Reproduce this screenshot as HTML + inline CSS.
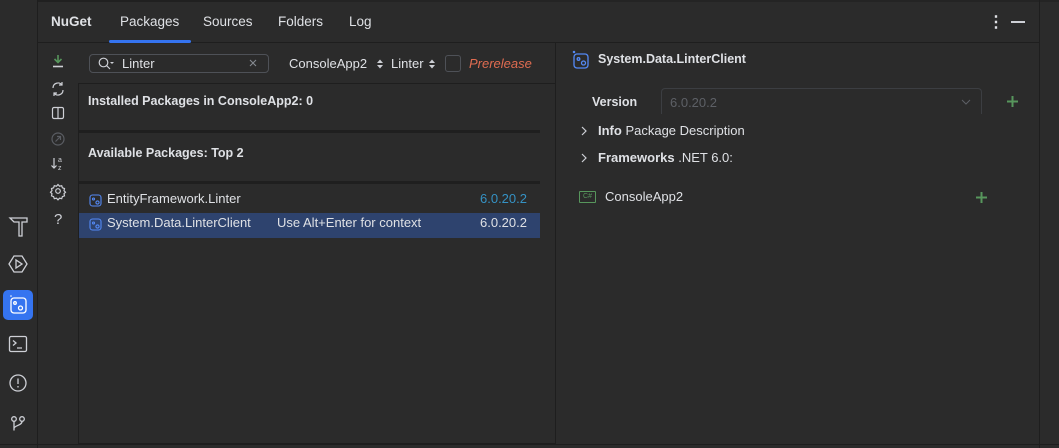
<!DOCTYPE html>
<html><head><meta charset="utf-8"><style>
*{margin:0;padding:0;box-sizing:border-box}
body{width:1059px;height:448px;background:#2b2b2b;font-family:"Liberation Sans",sans-serif;color:#dfe1e5;font-size:13px;position:relative;overflow:hidden}
.a{position:absolute}
.line{position:absolute;background:#1e1e1e}
.tab{position:absolute;top:14px;font-size:13.5px;color:#dfe1e5}
.lbl{position:absolute;white-space:nowrap}
</style></head><body>
<div class="line" style="left:37px;top:0;width:263px;height:2px;background:#202020"></div>
<div class="line" style="left:300px;top:0;width:759px;height:2px;background:#242424"></div>
<div class="line" style="left:37px;top:0;width:1px;height:448px"></div>
<div class="line" style="left:38px;top:42px;width:1001px;height:1px"></div>
<div class="line" style="left:1039px;top:0;width:1px;height:448px"></div>
<div class="line" style="left:0;top:444px;width:1059px;height:1px"></div>
<div class="line" style="left:555px;top:43px;width:1px;height:401px"></div>

<div class="tab" style="left:51px;font-weight:bold">NuGet</div>
<div class="tab" style="left:120px">Packages</div>
<div class="a" style="left:109px;top:40px;width:82px;height:3px;background:#3574f0;border-radius:2px"></div>
<div class="tab" style="left:203px">Sources</div>
<div class="tab" style="left:278px">Folders</div>
<div class="tab" style="left:349px">Log</div>
<div class="lbl" style="left:988px;top:12px;font-size:16px;font-weight:bold">⋮</div>
<div class="a" style="left:1011px;top:21px;width:14px;height:1.5px;background:#ced0d6"></div>

<svg class="a" style="left:44px;top:52px" width="30" height="180" fill="none" stroke="#ced0d6" stroke-width="1.2">
<path d="M14 3v7M10.5 7l3.5 3.5 3.5-3.5" stroke="#57965c" stroke-width="1.6"/><path d="M9 14.5h10" stroke-width="1.6"/>
<path d="M9 36a5 5 0 0 1 9-3M19 38a5 5 0 0 1-9 3M18 30v3h-3M10 44v-3h3"/>
<rect x="8.5" y="55.5" width="11" height="11" rx="1.5"/><path d="M14 56v10"/>
<circle cx="14" cy="87" r="6" stroke="#5a5d63"/><path d="M11.5 89.5l5-5M13 84.5h3.5v3.5" stroke="#5a5d63"/>
<path d="M10 106v10M7.5 113.5 10 116l2.5-2.5"/><text x="14" y="110" fill="#ced0d6" stroke="none" font-size="7" font-family="Liberation Sans">a</text><text x="14" y="118" fill="#ced0d6" stroke="none" font-size="7" font-family="Liberation Sans">z</text>
<circle cx="14" cy="139" r="2.3"/><path d="M14 132.5l1.5 1.7 2.2-.5.7 2.1 2.1.7-.5 2.2 1.5 1.5-1.5 1.5.5 2.2-2.1.7-.7 2.1-2.2-.5-1.5 1.7-1.5-1.7-2.2.5-.7-2.1-2.1-.7.5-2.2-1.5-1.5 1.5-1.5-.5-2.2 2.1-.7.7-2.1 2.2.5z"/>
<text x="10" y="172" fill="#ced0d6" stroke="none" font-size="15" font-family="Liberation Sans">?</text>
</svg>

<svg class="a" style="left:0;top:205px" width="37" height="235" fill="none" stroke="#ced0d6" stroke-width="1.3">
<path d="M10 13h17v4h-5v14h-3V17h-5z"/>
<path d="M9 59l5-8h8l5 8-5 8h-8z"/><path d="M16 55v8l6-4z"/>
<rect x="3" y="85" width="30" height="30" rx="5" fill="#3574f0" stroke="none"/>
<rect x="11" y="93" width="15" height="15" rx="3" stroke="#fff"/><circle cx="15" cy="98" r="1.3" stroke="#fff"/><circle cx="20.5" cy="103" r="2" stroke="#fff"/><circle cx="11" cy="91" r=".8" fill="#fff" stroke="none"/>
<rect x="9.5" y="131.5" width="17" height="15" rx="1.5"/><path d="M13 135.5l3 2.5-3 2.5M17 143h5"/>
<circle cx="18" cy="178" r="8"/><path d="M18 173.5v5.5M18 181v1.5"/>
<circle cx="14" cy="214" r="2.3"/><circle cx="22" cy="214" r="2.3"/><path d="M14 216.5v9M22 216.5c0 4-8 4-8 7"/>
</svg>

<div class="a" style="left:89px;top:54px;width:180px;height:19px;border:1px solid #4e5157;border-radius:4px"></div>
<svg class="a" style="left:97px;top:56px" width="22" height="15" fill="none" stroke="#ced0d6" stroke-width="1.2"><circle cx="6.5" cy="6.5" r="4.3"/><path d="M9.5 9.5l3.5 3.5"/><path d="M13 6h4l-2 2z" fill="#ced0d6" stroke="none"/></svg>
<div class="lbl" style="left:122px;top:56px;font-size:13px">Linter</div>
<svg class="a" style="left:248px;top:58px" width="10" height="10" stroke="#868a91" stroke-width="1.1"><path d="M2 2l6 6M8 2l-6 6"/></svg>
<div class="lbl" style="left:289px;top:56px">ConsoleApp2</div>
<svg class="a" style="left:376px;top:58px" width="8" height="12" fill="#ced0d6"><path d="M1 5l3-3.5L7 5zM1 7l3 3.5L7 7z"/></svg>
<div class="lbl" style="left:391px;top:56px">Linter</div>
<svg class="a" style="left:428px;top:58px" width="8" height="12" fill="#ced0d6"><path d="M1 5l3-3.5L7 5zM1 7l3 3.5L7 7z"/></svg>
<div class="a" style="left:445px;top:55px;width:16px;height:17px;border:1px solid #4e5157;border-radius:3px"></div>
<div class="lbl" style="left:469px;top:56px;color:#e06c51;font-style:italic">Prerelease</div>

<div class="line" style="left:78px;top:83px;width:477px;height:1px"></div>
<div class="line" style="left:78px;top:83px;width:1px;height:361px"></div>
<div class="line" style="left:79px;top:443px;width:476px;height:1px"></div>
<div class="line" style="left:79px;top:130px;width:461px;height:3px;background:#1f1f1f"></div>
<div class="line" style="left:79px;top:181px;width:461px;height:3px;background:#1f1f1f"></div>
<div class="lbl" style="left:88px;top:94px;font-weight:bold;font-size:12.5px">Installed Packages in ConsoleApp2: 0</div>
<div class="lbl" style="left:88px;top:146px;font-weight:bold;font-size:12.5px">Available Packages: Top 2</div>
<div class="a" style="left:79px;top:213px;width:461px;height:25px;background:#2e436e"></div>
<svg class="a" style="left:88px;top:192px" width="16" height="16" fill="none" stroke="#548af7" stroke-width="1.1"><rect x="2" y="3" width="11" height="11" rx="2.5"/><circle cx="5.5" cy="7" r="1"/><circle cx="9.5" cy="10.5" r="1.6"/></svg>
<svg class="a" style="left:88px;top:216px" width="16" height="16" fill="none" stroke="#548af7" stroke-width="1.1"><rect x="2" y="3" width="11" height="11" rx="2.5"/><circle cx="5.5" cy="7" r="1"/><circle cx="9.5" cy="10.5" r="1.6"/></svg>
<div class="lbl" style="left:107px;top:191px">EntityFramework.Linter</div>
<div class="lbl" style="left:480px;top:191px;color:#3592c4">6.0.20.2</div>
<div class="lbl" style="left:107px;top:215px">System.Data.LinterClient</div>
<div class="lbl" style="left:277px;top:215px">Use Alt+Enter for context</div>
<div class="lbl" style="left:480px;top:215px">6.0.20.2</div>

<svg class="a" style="left:572px;top:50px" width="20" height="20" fill="none" stroke="#548af7" stroke-width="1.3"><rect x="2" y="4" width="14" height="14" rx="3"/><circle cx="6.5" cy="9" r="1.3"/><circle cx="11.5" cy="13" r="2"/><circle cx="2" cy="2" r=".6" fill="#548af7"/></svg>
<div class="lbl" style="left:598px;top:52px;font-weight:bold;font-size:12.5px">System.Data.LinterClient</div>
<div class="lbl" style="left:592px;top:95px;font-weight:bold;font-size:12.5px">Version</div>
<div class="a" style="left:661px;top:88px;width:321px;height:26px;border:1px solid #3c3e42;border-bottom:none;border-radius:4px 4px 0 0"></div>
<div class="lbl" style="left:670px;top:95px;color:#5d6066">6.0.20.2</div>
<svg class="a" style="left:960px;top:98px" width="12" height="8" fill="none" stroke="#5d6066"><path d="M2 2l4 4 4-4"/></svg>
<svg class="a" style="left:1006px;top:95px" width="13" height="13" stroke="#57965c" stroke-width="2"><path d="M6.5 1v11M1 6.5h11"/></svg>
<svg class="a" style="left:580px;top:125px" width="8" height="12" fill="none" stroke="#ced0d6" stroke-width="1.2"><path d="M2 2l4 4-4 4"/></svg>
<div class="lbl" style="left:598px;top:123px"><b>Info</b> Package Description</div>
<svg class="a" style="left:580px;top:152px" width="8" height="12" fill="none" stroke="#ced0d6" stroke-width="1.2"><path d="M2 2l4 4-4 4"/></svg>
<div class="lbl" style="left:598px;top:150px"><b>Frameworks</b> .NET 6.0:</div>
<div class="a" style="left:579px;top:191px;width:17px;height:12px;border:1px solid #57965c;border-radius:1px;color:#57965c;font-size:7px;line-height:10px;text-align:center">C#</div>
<div class="lbl" style="left:605px;top:189px">ConsoleApp2</div>
<svg class="a" style="left:975px;top:191px" width="13" height="13" stroke="#57965c" stroke-width="2"><path d="M6.5 1v11M1 6.5h11"/></svg>
</body></html>
